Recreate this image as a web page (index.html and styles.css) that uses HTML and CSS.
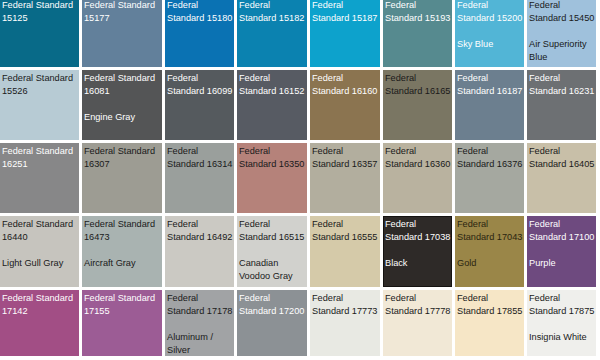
FILE: index.html
```html
<!DOCTYPE html>
<html>
<head>
<meta charset="utf-8">
<link rel="stylesheet" href="styles.css">
</head>
<body>
<div class="chart">
  <div class="sw c15125 lt"><span class="code">Federal Standard 15125</span></div>
  <div class="sw c15177 lt"><span class="code">Federal Standard 15177</span></div>
  <div class="sw c15180 lt"><span class="code">Federal Standard 15180</span></div>
  <div class="sw c15182 lt"><span class="code">Federal Standard 15182</span></div>
  <div class="sw c15187 lt"><span class="code">Federal Standard 15187</span></div>
  <div class="sw c15193 lt"><span class="code">Federal Standard 15193</span></div>
  <div class="sw c15200 lt"><span class="code">Federal Standard 15200</span><span class="name">Sky Blue</span></div>
  <div class="sw c15450 dk"><span class="code">Federal Standard 15450</span><span class="name">Air Superiority Blue</span></div>

  <div class="sw c15526 dk"><span class="code">Federal Standard 15526</span></div>
  <div class="sw c16081 lt"><span class="code">Federal Standard 16081</span><span class="name">Engine Gray</span></div>
  <div class="sw c16099 lt"><span class="code">Federal Standard 16099</span></div>
  <div class="sw c16152 lt"><span class="code">Federal Standard 16152</span></div>
  <div class="sw c16160 lt"><span class="code">Federal Standard 16160</span></div>
  <div class="sw c16165 dk"><span class="code">Federal Standard 16165</span></div>
  <div class="sw c16187 lt"><span class="code">Federal Standard 16187</span></div>
  <div class="sw c16231 lt"><span class="code">Federal Standard 16231</span></div>

  <div class="sw c16251 lt"><span class="code">Federal Standard 16251</span></div>
  <div class="sw c16307 dk"><span class="code">Federal Standard 16307</span></div>
  <div class="sw c16314 dk"><span class="code">Federal Standard 16314</span></div>
  <div class="sw c16350 dk"><span class="code">Federal Standard 16350</span></div>
  <div class="sw c16357 dk"><span class="code">Federal Standard 16357</span></div>
  <div class="sw c16360 dk"><span class="code">Federal Standard 16360</span></div>
  <div class="sw c16376 dk"><span class="code">Federal Standard 16376</span></div>
  <div class="sw c16405 dk"><span class="code">Federal Standard 16405</span></div>

  <div class="sw c16440 dk"><span class="code">Federal Standard 16440</span><span class="name">Light Gull Gray</span></div>
  <div class="sw c16473 dk"><span class="code">Federal Standard 16473</span><span class="name">Aircraft Gray</span></div>
  <div class="sw c16492 dk"><span class="code">Federal Standard 16492</span></div>
  <div class="sw c16515 dk"><span class="code">Federal Standard 16515</span><span class="name">Canadian Voodoo Gray</span></div>
  <div class="sw c16555 dk"><span class="code">Federal Standard 16555</span></div>
  <div class="sw c17038 lt"><span class="code">Federal Standard 17038</span><span class="name">Black</span></div>
  <div class="sw c17043 dk"><span class="code">Federal Standard 17043</span><span class="name">Gold</span></div>
  <div class="sw c17100 lt"><span class="code">Federal Standard 17100</span><span class="name">Purple</span></div>

  <div class="sw c17142 lt"><span class="code">Federal Standard 17142</span></div>
  <div class="sw c17155 lt"><span class="code">Federal Standard 17155</span></div>
  <div class="sw c17178 dk"><span class="code">Federal Standard 17178</span><span class="name">Aluminum / Silver</span></div>
  <div class="sw c17200 lt"><span class="code">Federal Standard 17200</span></div>
  <div class="sw c17773 dk"><span class="code">Federal Standard 17773</span></div>
  <div class="sw c17778 dk"><span class="code">Federal Standard 17778</span></div>
  <div class="sw c17855 dk"><span class="code">Federal Standard 17855</span></div>
  <div class="sw c17875 dk"><span class="code">Federal Standard 17875</span><span class="name">Insignia White</span></div>
</div>
</body>
</html>
```

FILE: styles.css
```css
html, body {
  margin: 0;
  padding: 0;
  background: #ffffff;
}
body {
  width: 600px;
  height: 360px;
  overflow: hidden;
  font-family: "Liberation Sans", Arial, sans-serif;
}
.chart {
  display: grid;
  grid-template-columns: 79px 80px 69px 70px 70px 69px 69px 69px;
  grid-template-rows: 70px 70px 70px 71px 66px;
  column-gap: 3px;
  row-gap: 3px;
  margin-top: -3px;
  width: 596px;
}
.sw {
  box-sizing: border-box;
  padding: 2px 0 0 2px;
  font-size: 9.2px;
  line-height: 13px;
  overflow: hidden;
}
.code, .name { display: block; }
.name { margin-top: 13px; }
.lt { color: #ffffff; }
.dk { color: #1a1a1a; }

.c15125 { background: #086a88; }
.c15177 { background: #62809b; }
.c15180 { background: #0a72b3; }
.c15182 { background: #0b82b0; }
.c15187 { background: #0da2cc; }
.c15193 { background: #568a8f; }
.c15200 { background: #52b5d6; }
.c15450 { background: #9fc1dc; }

.c15526 { background: #b7cbd4; }
.c16081 { background: #545556; }
.c16099 { background: #555a5e; }
.c16152 { background: #575b63; }
.c16160 { background: #8b7450; }
.c16165 { background: #7a7663; }
.c16187 { background: #6c7f8f; }
.c16231 { background: #6d7073; }

.c16251 { background: #878788; }
.c16307 { background: #9d9c93; }
.c16314 { background: #9a9f9c; }
.c16350 { background: #b5827a; }
.c16357 { background: #b2ae9e; }
.c16360 { background: #b9b29f; }
.c16376 { background: #a5a8a0; }
.c16405 { background: #c8bfa8; }

.c16440 { background: #c6c4be; }
.c16473 { background: #a9b3b1; }
.c16492 { background: #cbc9c3; }
.c16515 { background: #d1d1cd; }
.c16555 { background: #d5caa9; }
.c17038 { background: #2e2a28; box-shadow: inset 0 0 0 1px #151312; }
.c17043 { background: #9a8648; color: #2a2510; }
.c17100 { background: #6e4a7f; }

.c17142 { background: #a24e85; }
.c17155 { background: #9c5c95; }
.c17178 { background: #a1a3a5; }
.c17200 { background: #8c9195; }
.c17773 { background: #e8e9e3; }
.c17778 { background: #f1e8d6; }
.c17855 { background: #f6e6c6; }
.c17875 { background: #efefec; }
```
